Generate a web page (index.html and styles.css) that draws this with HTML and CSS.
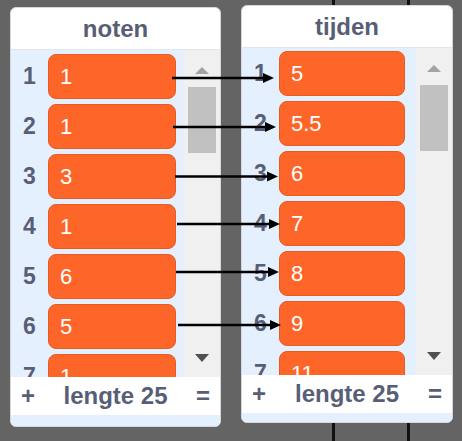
FILE: index.html
```html
<!DOCTYPE html>
<html>
<head>
<meta charset="utf-8">
<link rel="stylesheet" href="styles.css">
</head>
<body>
<div class="stage">
  <div class="monitor monitor-left">
    <div class="monitor-header">noten</div>
    <div class="monitor-body">
      <div class="rows rows-left">
        <div class="row"><span class="index">1</span><span class="value">1</span></div>
        <div class="row"><span class="index">2</span><span class="value">1</span></div>
        <div class="row"><span class="index">3</span><span class="value">3</span></div>
        <div class="row"><span class="index">4</span><span class="value">1</span></div>
        <div class="row"><span class="index">5</span><span class="value">6</span></div>
        <div class="row"><span class="index">6</span><span class="value">5</span></div>
        <div class="row"><span class="index">7</span><span class="value">1</span></div>
      </div>
      <div class="scrollbar scrollbar-left">
        <span class="arrow-up"></span>
        <span class="thumb"></span>
        <span class="spacer"></span>
        <span class="arrow-down"></span>
      </div>
    </div>
    <div class="monitor-footer">
      <span class="footer-btn">+</span>
      <span class="footer-label">lengte 25</span>
      <span class="footer-btn">=</span>
    </div>
    <div class="monitor-strip strip-left"></div>
  </div>

  <div class="monitor monitor-right">
    <div class="monitor-header">tijden</div>
    <div class="monitor-body">
      <div class="rows rows-right">
        <div class="row"><span class="index">1</span><span class="value">5</span></div>
        <div class="row"><span class="index">2</span><span class="value">5.5</span></div>
        <div class="row"><span class="index">3</span><span class="value">6</span></div>
        <div class="row"><span class="index">4</span><span class="value">7</span></div>
        <div class="row"><span class="index">5</span><span class="value">8</span></div>
        <div class="row"><span class="index">6</span><span class="value">9</span></div>
        <div class="row"><span class="index">7</span><span class="value">11</span></div>
      </div>
      <div class="scrollbar scrollbar-right">
        <span class="arrow-up"></span>
        <span class="thumb"></span>
        <span class="spacer"></span>
        <span class="arrow-down"></span>
      </div>
    </div>
    <div class="monitor-footer">
      <span class="footer-btn">+</span>
      <span class="footer-label">lengte 25</span>
      <span class="footer-btn">=</span>
    </div>
    <div class="monitor-strip strip-right"></div>
  </div>
</div>

<svg class="arrows" width="462" height="441" viewBox="0 0 462 441">
  <g stroke="#000" stroke-width="2.5" fill="none">
    <line x1="172" y1="78" x2="264" y2="78"/>
    <line x1="173" y1="127" x2="266" y2="127"/>
    <line x1="175" y1="176.5" x2="268" y2="176.5"/>
    <line x1="177" y1="224" x2="270" y2="224"/>
    <line x1="176" y1="272" x2="269" y2="272"/>
    <line x1="178" y1="325" x2="271" y2="325"/>
  </g>
  <g fill="#000">
    <polygon points="274,78 263,73 263,83"/>
    <polygon points="276,127 265,122 265,132"/>
    <polygon points="278,176.5 267,171.5 267,181.5"/>
    <polygon points="280,224 269,219 269,229"/>
    <polygon points="279,272 268,267 268,277"/>
    <polygon points="281,325 270,320 270,330"/>
  </g>
</svg>
</body>
</html>
```

FILE: styles.css
```css
html, body {
  margin: 0;
  padding: 0;
}

body {
  width: 462px;
  height: 441px;
  overflow: hidden;
  position: relative;
  font-family: "Liberation Sans", Arial, sans-serif;
  background:
    linear-gradient(#111, #111) 332px 0 / 3px 100% no-repeat,
    linear-gradient(#111, #111) 407px 0 / 3px 100% no-repeat,
    #646464;
}

.stage {
  display: flex;
  align-items: flex-start;
  gap: 20px;
  padding-left: 10px;
}

.monitor {
  display: flex;
  flex-direction: column;
  background: #ffffff;
  border: 1px solid #d4d8de;
  border-radius: 6px;
  overflow: hidden;
  box-sizing: border-box;
}

.monitor-left {
  width: 211px;
  margin-top: 7px;
}

.monitor-right {
  width: 212px;
  margin-top: 5px;
}

.monitor-header {
  height: 41px;
  line-height: 41px;
  border-bottom: 1px solid #e3e6ea;
  text-align: center;
  font-size: 24px;
  font-weight: bold;
  color: #575e75;
}

.monitor-body {
  height: 327px;
  display: flex;
  background: #e5f0ff;
  overflow: hidden;
}

.rows {
  flex: 1;
  display: flex;
  flex-direction: column;
  gap: 5px;
}

.rows-left {
  padding-top: 4px;
  padding-right: 7px;
}

.rows-right {
  padding-top: 3px;
  padding-right: 11px;
}

.row {
  display: flex;
  align-items: center;
  height: 45px;
  flex-shrink: 0;
}

.index {
  width: 37px;
  flex-shrink: 0;
  text-align: center;
  font-size: 23px;
  font-weight: bold;
  color: #575e75;
}

.value {
  flex: 1;
  height: 45px;
  box-sizing: border-box;
  display: flex;
  align-items: center;
  padding-left: 11px;
  background: #fe6629;
  border: 1px solid #e85a20;
  border-radius: 8px;
  color: #ffffff;
  font-size: 22px;
}

.scrollbar {
  display: flex;
  flex-direction: column;
  align-items: center;
  background: #f0f0f0;
  padding-top: 17px;
  padding-bottom: 15px;
  box-sizing: border-box;
}

.scrollbar-left {
  width: 37px;
}

.scrollbar-right {
  width: 36px;
}

.arrow-up {
  width: 0;
  height: 0;
  border-left: 7px solid transparent;
  border-right: 7px solid transparent;
  border-bottom: 7px solid #a3a3a3;
}

.thumb {
  margin-top: 13px;
  width: 28px;
  height: 66px;
  background: #c1c1c1;
}

.spacer {
  flex: 1;
}

.arrow-down {
  width: 0;
  height: 0;
  border-left: 7px solid transparent;
  border-right: 7px solid transparent;
  border-top: 8px solid #505050;
}

.monitor-footer {
  height: 38px;
  display: flex;
  align-items: center;
  justify-content: space-between;
  padding: 0 9px;
  background: #ffffff;
  color: #575e75;
  font-size: 24px;
  font-weight: bold;
}

.footer-btn {
  width: 16px;
  text-align: center;
}

.monitor-strip {
  background: #e5f0ff;
}

.strip-left {
  height: 11px;
}

.strip-right {
  height: 9px;
}

.arrows {
  position: absolute;
  top: 0;
  left: 0;
  pointer-events: none;
}
```
